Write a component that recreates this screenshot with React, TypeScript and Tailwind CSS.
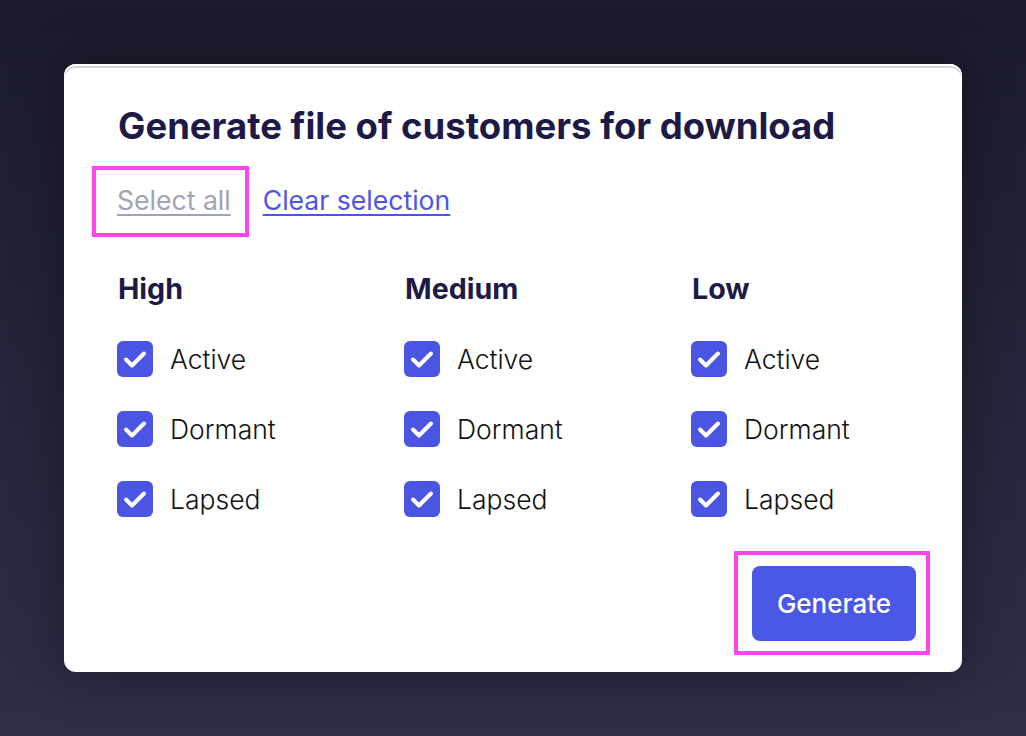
import React from 'react';

const groups = ['High', 'Medium', 'Low'];
const statuses = ['Active', 'Dormant', 'Lapsed'];

const CheckIcon = () => (
    <svg viewBox="0 0 36 36" className="w-9 h-9">
        <rect width="36" height="36" rx="6" fill="#4a55e3" />
        <path d="M9 18.5l6 6L27 12.5" fill="none" stroke="#fff" strokeWidth="4" strokeLinecap="round" strokeLinejoin="round" />
    </svg>
);

export default function App() {
    return (
        <div
            className="w-[1026px] h-[736px] bg-gradient-to-b from-[#1b1a2d] to-[#2d2e47] pt-16 pl-16"
            style={{ fontFamily: 'Inter, "Liberation Sans", sans-serif' }}
        >
            <div className="w-[898px] h-[608px] bg-white rounded-xl shadow-[inset_0_2px_0_#fff,inset_0_4px_0_#d5d5da,0_0_50px_rgba(0,0,0,0.35)] pl-[54px] pr-[46px] pt-[40px] flex flex-col">
                <h1 className="text-[36.5px] leading-[44px] font-bold text-[#1d1a45]">
                    Generate file of customers for download
                </h1>

                {/* selection links */}
                <div className="flex items-center mt-[18px] -ml-[26px] text-[26.6px] leading-[30px]">
                    <div className="border-4 border-[#ff44f0] pl-[21px] pr-[14px] pt-[15px] pb-[18px]">
                        <a href="#" className="text-[#a3a1b8] underline underline-offset-[4px] decoration-[1.5px]">Select all</a>
                    </div>
                    <a href="#" className="ml-[14px] -mt-[3px] text-[#4f54e9] underline underline-offset-[4px] decoration-[1.5px]">Clear selection</a>
                </div>

                {/* groups */}
                <div className="grid grid-cols-[287px_287px_1fr] mt-[35px]">
                    {groups.map((g) => (
                        <div key={g}>
                            <h2 className="text-[28.6px] leading-[34px] font-bold text-[#1d1a45]">{g}</h2>
                            <div className="flex flex-col gap-[34px] mt-[35px]">
                                {statuses.map((s) => (
                                    <label key={s} className="flex items-center gap-[17px] -ml-px">
                                        <CheckIcon />
                                        <span className="text-[26.5px] leading-[36px] font-light text-[#111]">{s}</span>
                                    </label>
                                ))}
                            </div>
                        </div>
                    ))}
                </div>

                <div className="flex justify-end mt-[34px] -mr-[14px]">
                    <div className="border-4 border-[#ff44f0] pl-[14px] pt-[11px] pr-[10px] pb-[10px]">
                        <button className="w-[164px] h-[75px] rounded-lg bg-[#4b57e5] text-white text-[26px] font-medium">
                            Generate
                        </button>
                    </div>
                </div>
            </div>
        </div>
    );
}
